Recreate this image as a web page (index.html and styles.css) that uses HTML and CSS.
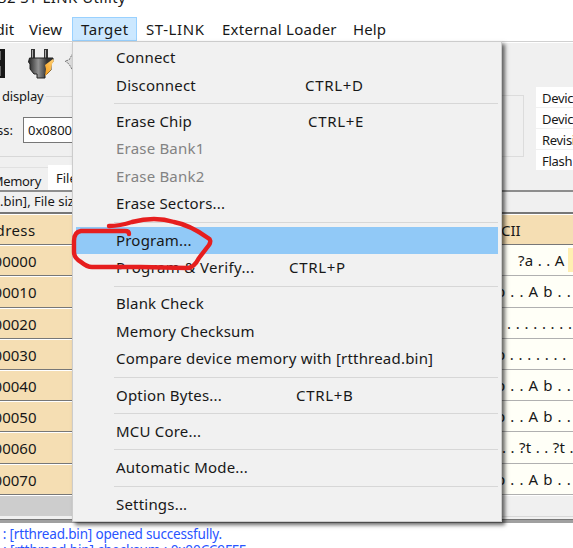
FILE: index.html
```html
<!DOCTYPE html>
<html lang="en">
<head>
<meta charset="utf-8">
<title>ST-LINK Utility</title>
<link rel="stylesheet" href="styles.css">
</head>
<body>
<div class="window">
  <div class="title"><span>32 ST-LINK Utility</span></div>
  <nav class="menubar">
    <span class="m-edit">Edit</span><span class="m-view">View</span><span class="m-target">Target</span><span class="m-link">ST-LINK</span><span class="m-loader">External Loader</span><span class="m-help">Help</span>
  </nav>
  <div class="panel">
    <div class="controls">
      <div class="toolbar">
        <svg width="80" height="42" viewBox="0 43 80 42">
          <defs>
            <linearGradient id="g" x1="0" x2="1"><stop offset="0" stop-color="#252525"/><stop offset=".4" stop-color="#929292"/><stop offset=".75" stop-color="#333"/></linearGradient>
            <linearGradient id="o" x1="0" x2="1" y1="1" y2="0"><stop offset="0" stop-color="#f79b16"/><stop offset="1" stop-color="#ffd37a"/></linearGradient>
          </defs>
          <path d="M0 49H5V78H0Z" fill="#171717"/><path d="M0 51H1V60H0ZM0 66H1V76H0Z" fill="#666"/>
          <path d="M31 49h4v12h-4zM44 49h4v12h-4z" fill="#333"/><path d="M32.5 50v10M45.5 50v10" stroke="#aaa"/>
          <path d="M29.500 58h23.500v4l-2 2v6l-4 4h-2v4h-8v-4h-3l-4-5v-5l-1.500-2z" fill="url(#g)" stroke="#222"/>
          <path d="M53 59l-8 6 1 4-1 7 6-6 1-6 2-3z" fill="url(#o)"/>
          <path d="M73 53l-4 7-4 1 4 3 4 7" fill="#ddd" stroke="#777" stroke-dasharray="2 1"/>
        </svg>
      </div>
      <div class="display"><span>display</span><i></i></div>
      <div class="address"><span>ss:</span><b>0x0800</b></div>
      <div class="tabs"><span>Memory</span><b>File</b></div>
    </div>
    <div class="device-area">
      <div class="group"></div>
      <div class="device"><span>Device</span><span>Device</span><span>Revisi</span><span>Flash s</span></div>
    </div>
  </div>
  <div class="filebar">.bin], File size</div>
  <div class="grid">
    <div class="row head"><span>dress</span><b><em class="cii">CII</em></b></div>
    <div class="row"><span>00000</span><b><em class="q">?a . . A</em><i></i></b></div>
    <div class="row"><span>00010</span><b><em class="ab"><u>b</u> . . A b . .</em></b></div>
    <div class="row"><span>00020</span><b><em class="dots">........</em></b></div>
    <div class="row"><span>00030</span><b><em class="ab"><u>b</u></em><em class="dots second">.......</em></b></div>
    <div class="row"><span>00040</span><b><em class="ab"><u>b</u> . . A b . .</em></b></div>
    <div class="row"><span>00050</span><b><em class="ab"><u>b</u> . . A b . .</em></b></div>
    <div class="row"><span>00060</span><b><em class="qt">. . ?t . . ?t .</em></b></div>
    <div class="row"><span>00070</span><b><em class="ab"><u>b</u> . . A b . .</em></b></div>
  </div>
  <div class="scroll"><span></span><b></b></div>
  <div class="edge"></div>
  <div class="log"><p>e : [rtthread.bin] opened successfully.</p><p class="sum">e : [rtthread.bin] checksum : 0x00CC9FFE</p></div>
</div>
<div class="menu">
  <div class="item"><span>Connect</span></div>
  <div class="item"><span>Disconnect</span><kbd class="kd">CTRL+D</kbd></div>
  <hr>
  <div class="item"><span>Erase Chip</span><kbd class="ke">CTRL+E</kbd></div>
  <div class="item off"><span>Erase Bank1</span></div>
  <div class="item off"><span>Erase Bank2</span></div>
  <div class="item"><span>Erase Sectors...</span></div>
  <hr>
  <div class="item active"><span>Program...</span></div>
  <div class="item verify"><span>Program &amp; Verify...</span><kbd class="kp">CTRL+P</kbd></div>
  <hr>
  <div class="item"><span>Blank Check</span></div>
  <div class="item"><span>Memory Checksum</span></div>
  <div class="item"><span>Compare device memory with [rtthread.bin]</span></div>
  <hr>
  <div class="item"><span>Option Bytes...</span><kbd class="kb">CTRL+B</kbd></div>
  <hr>
  <div class="item"><span>MCU Core...</span></div>
  <hr>
  <div class="item"><span>Automatic Mode...</span></div>
  <hr>
  <div class="item"><span>Settings...</span></div>
</div>
<svg class="mark" width="573" height="548" viewBox="0 0 573 548"><path d="M109 226Q120 226 132 222Q155 216 174 222Q190 225 208 238Q212 240 209 245L199 258Q194 268 187 268L140 267L92 267Q87 267 81 262Q74 258 74 252V241Q74 232 81 231L125 231Q129 231 129 234" fill="none" stroke="#e61e1e" stroke-width="4.4" stroke-linecap="round" stroke-linejoin="round"/></svg>
</body>
</html>
```
FILE: styles.css
```css
* { box-sizing: border-box; }
body { margin: 0; width: 573px; height: 548px; overflow: hidden; position: relative; background: #fff; color: #181818; font: 15px/20px "Noto Sans", "Open Sans", sans-serif; white-space: nowrap; }
b, em { font-weight: normal; font-style: normal; }
.window { width: 573px; height: 548px; overflow: hidden; }
.title { height: 17px; display: flex; }
.title span { margin: -13px 0 0 -2px; font-size: 15px; letter-spacing: .43px; }
.menubar { height: 25px; display: flex; line-height: 25px; border-bottom: 1px solid #d0d0d0; }
.menubar span { flex: none; letter-spacing: .1px; }
.m-edit { width: 42px; margin-left: -13px; text-align: right; padding-right: 17px; }
.m-view { width: 43px; }
.m-target { width: 65px; height: 24px; background: #cce8ff; border: 1px solid #99d1ff; padding-left: 8px; line-height: 23px; }
.menubar .m-target { letter-spacing: .5px; }
.m-link { width: 76px; margin-left: 9px; }
.menubar .m-link { letter-spacing: .6px; }
.menubar .m-loader { width: 131px; letter-spacing: .25px; }
.panel { height: 150px; background: #f0f0f0; border-top: 1px solid #fff; border-bottom: 2px solid #8d8d8d; display: flex; justify-content: space-between; }
.controls { width: 100px; display: flex; flex-direction: column; font-size: 13px; }
.controls > div { flex-shrink: 0; }
.toolbar { height: 42px; }
.toolbar svg { display: block; }
.display { height: 22px; display: flex; align-items: center; gap: 3px; padding-left: 2px; letter-spacing: -.2px; line-height: 22px; }
.display i { flex: 1; height: 1px; background: #dcdcdc; }
.address { height: 50px; border-bottom: 1px solid #d8d8d8; display: flex; gap: 10px; align-items: flex-start; padding-top: 10px; margin-left: -3px; line-height: 27px; }
.address b { width: 80px; height: 26px; line-height: 25px; border: 1px solid #777; background: #fff; padding-left: 4px; }
.tabs { height: 23px; display: flex; margin-top: 10px; line-height: 26px; border-top: 1px solid #e1e1e1; }
.tabs span { width: 48px; display: flex; justify-content: flex-end; padding-right: 7px; letter-spacing: -.3px; }
.tabs b { width: 60px; background: #fff; margin-top: -3px; padding-left: 8px; height: 25px; line-height: 26px; }
.device-area { display: flex; width: 119px; font-size: 13px; }
.group { flex: none; width: 70px; height: 62px; margin-top: 52px; border: 1px solid #dcdcdc; }
.device { flex: none; margin: 44px 0 0 12px; display: flex; flex-direction: column; gap: 1px; }
.device span { width: 40px; height: 20px; line-height: 22px; background: #fff; padding-left: 6px; overflow: hidden; letter-spacing: -.3px; }
.filebar { height: 20px; line-height: 19px; background: #f0f0f0; font-size: 13px; }
.grid { border-top: 2px solid #777; background: #fff; }
.row { height: 31.2px; display: flex; justify-content: space-between; line-height: 30px; }
.row span { width: 80px; padding-top: 1px; border-top: 1px solid #fff; border-bottom: 1px solid #777; background: #f5deb3; display: flex; padding-right: 43.5px; justify-content: flex-end; line-height: 29px; }
.row b { width: 80px; background: #fffff7; border-bottom: 1px solid #b0b0b0; display: flex; padding-left: 9px; overflow: hidden; }
.head span { padding-right: 44.5px; letter-spacing: .4px; }
.head b { background: #f5deb3; border-top: 1px solid #fff; border-bottom-color: #777; line-height: 30px; }
.cii { margin-left: -1px; }
.q { margin-left: 16px; width: 50px; letter-spacing: .3px; }
.row i { width: 5px; background: #ffefb1; margin: 3px 0 3px 3px; }
.ab { flex: none; margin-left: -6px; letter-spacing: .6px; }
.ab u { text-decoration: none; }
.dots { margin-left: 5px; letter-spacing: 4.7px; }
.dots.second { margin-left: 4px; }
.qt { letter-spacing: .3px; }
.scroll { height: 24px; display: flex; justify-content: space-between; border-top: 1px solid #fff; background: #f0f0f0; }
.scroll span { width: 80px; height: 20px; background: #cdcdcd; }
.scroll b { width: 80px; height: 21px; border-bottom: 1px solid #d8d8d8; }
.edge { height: 4px; background: #a0a0a0; border-top: 1px solid #777; }
.log { color: #2854ff; font-size: 13.5px; line-height: 16px; padding-top: 3px; margin-left: -8px; letter-spacing: -.18px; }
.log p { margin: 0; }
.log .sum { letter-spacing: -.08px; }
.menu { position: absolute; left: 72px; top: 41px; width: 430px; height: 481px; background: #f1f1f1; border: 1px solid #ccc; padding: 2px 3px 0; box-shadow: 3px 3px 4px rgba(0,0,0,.6); }
.item { height: 27.5px; line-height: 27.5px; padding-left: 40px; display: flex; position: relative; letter-spacing: .2px; }
.menu hr { height: 1px; border: 0; background: #d7d7d7; margin: 4px 0 3.8px 38px; }
.off { color: #838383; }
.active { background: #91c9f7; }
.verify { letter-spacing: .35px; }
kbd { font: inherit; position: absolute; letter-spacing: .7px; }
.kd { left: 229px; }
.ke { left: 232px; }
.kp { left: 213px; }
.kb { left: 220px; }
.mark { position: absolute; left: 0; top: 0; }
```
